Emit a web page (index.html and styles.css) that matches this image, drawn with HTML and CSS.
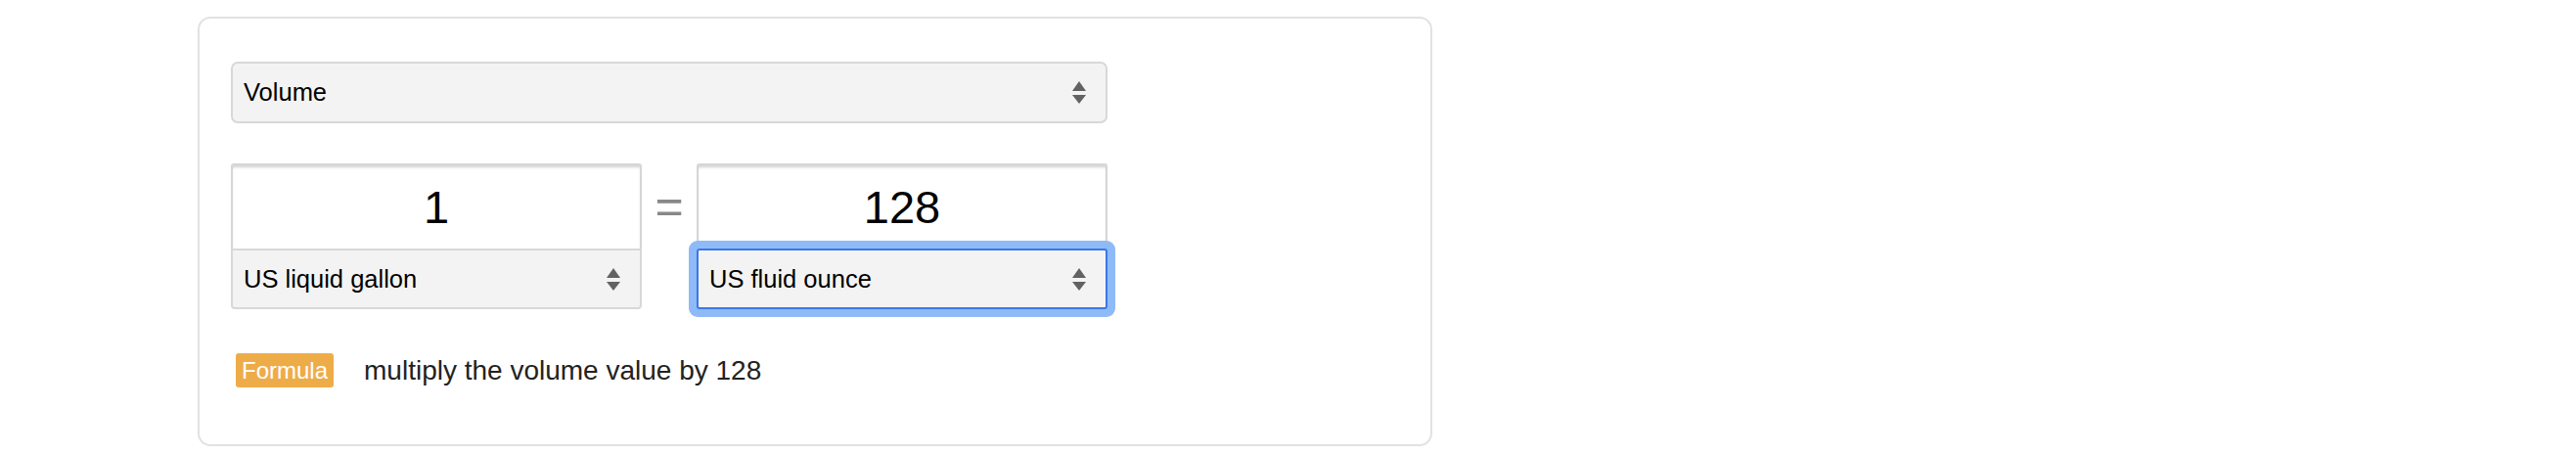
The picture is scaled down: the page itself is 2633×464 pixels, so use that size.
FILE: index.html
```html
<!DOCTYPE html>
<html lang="en">
<head>
    <meta charset="UTF-8">
    <meta name="viewport" content="width=device-width, initial-scale=1.0">
    <title>Volume Converter</title>
    <link rel="stylesheet" href="styles.css">
</head>
<body>

    <div class="card">
        <div class="select category-select">
            <span>Volume</span>
            <svg class="arrows" viewBox="0 0 14 23" width="14" height="23">
                <path d="M7 0 L14 10 L0 10 Z"/>
                <path d="M0 14 L14 14 L7 23 Z"/>
            </svg>
        </div>

        <div class="converter">
            <div class="unit-box">
                <div class="unit-value">1</div>
                <div class="select unit-select">
                    <span>US liquid gallon</span>
                    <svg class="arrows" viewBox="0 0 14 23" width="14" height="23">
                        <path d="M7 0 L14 10 L0 10 Z"/>
                        <path d="M0 14 L14 14 L7 23 Z"/>
                    </svg>
                </div>
            </div>

            <div class="equals">=</div>

            <div class="unit-box">
                <div class="unit-value">128</div>
                <div class="select unit-select focused">
                    <span>US fluid ounce</span>
                    <svg class="arrows" viewBox="0 0 14 23" width="14" height="23">
                        <path d="M7 0 L14 10 L0 10 Z"/>
                        <path d="M0 14 L14 14 L7 23 Z"/>
                    </svg>
                </div>
            </div>
        </div>

        <div class="formula">
            <span class="badge">Formula</span>
            <span class="formula-text">multiply the volume value by 128</span>
        </div>
    </div>

</body>
</html>
```
FILE: styles.css
```css
* {
    margin: 0;
    padding: 0;
    box-sizing: border-box;
}
body {
    background: #fff;
    font-family: "Liberation Sans", Arial, sans-serif;
    color: #000;
}
.card {
    width: 1262px;
    height: 439px;
    margin: 17px 0 0 202px;
    padding: 44px 0 0 32px;
    border: 2px solid #e2e2e2;
    border-radius: 13px;
}
/* fake select boxes */
.select {
    display: flex;
    align-items: center;
    justify-content: space-between;
    background-color: #f3f3f3;
    border: 2px solid #d8d8d8;
    font-size: 25.5px;
    padding: 0 20px 0 11px;
}
.arrows {
    fill: #626262;
}
.category-select {
    width: 896px;
    height: 63px;
    border-radius: 7px;
}
.converter {
    display: flex;
    align-items: flex-start;
    margin-top: 41px;
}
.unit-box {
    width: 420px;
    display: flex;
    flex-direction: column;
}
.unit-value {
    height: 87px;
    display: flex;
    align-items: center;
    justify-content: center;
    font-size: 47px;
    background: #fff;
    border: 2px solid #d6d6d6;
    border-bottom: none;
    border-radius: 3px 3px 0 0;
    box-shadow: inset 0 3px 3px -1px rgba(0, 0, 0, 0.18);
}
.unit-select {
    height: 62px;
    border-radius: 0 0 4px 4px;
}
.unit-select.focused {
    border-color: #3b78e7;
    border-radius: 3px;
    box-shadow: 0 0 0 8px #8ebaf7;
}
.equals {
    width: 56px;
    height: 87px;
    display: flex;
    align-items: center;
    justify-content: center;
    font-size: 50px;
    color: #888;
}
.formula {
    display: flex;
    align-items: center;
    gap: 31px;
    margin: 45px 0 0 5px;
}
.badge {
    background-color: #eeac49;
    color: #fff;
    font-size: 24px;
    line-height: 35px;
    padding: 0 6px;
    border-radius: 3px;
}
.formula-text {
    font-size: 28px;
    color: #222;
}
```
